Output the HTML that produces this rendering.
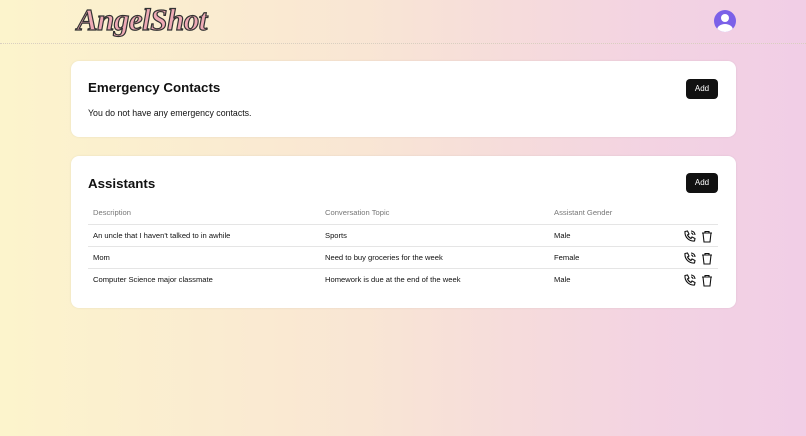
<!DOCTYPE html>
<html><head><style>
*{margin:0;padding:0;box-sizing:border-box}
body{width:806px;height:436px;overflow:hidden;font-family:"Liberation Sans",Arial,sans-serif;background:linear-gradient(90deg,#fcf4cc 0%,#f9e6d4 45%,#f3d3e2 80%,#f1cee6 100%);position:relative;color:#111}
.hdr{position:absolute;left:0;top:0;width:806px;height:44px;border-bottom:1px dotted #d9cfc0}
.logo{position:absolute;left:77px;top:2px;font-family:"Liberation Serif",serif;font-style:italic;font-weight:bold;font-size:31px;color:#eeaab5;-webkit-text-stroke:1.2px #333;letter-spacing:-0.5px}
.av{position:absolute;left:714px;top:10px;width:22px;height:22px;border-radius:50%;background:#7b61e8;overflow:hidden}
.av:before{content:"";position:absolute;left:7px;top:4px;width:8px;height:8px;border-radius:50%;background:#fff}
.av:after{content:"";position:absolute;left:3px;top:14px;width:16px;height:12px;border-radius:50%;background:#fff}
.card{position:absolute;left:71px;width:665px;background:#fff;border-radius:8px;box-shadow:0 0 2px rgba(0,0,0,.08)}
h2{position:absolute;left:17px;font-size:13.3px;font-weight:bold}
.btn{position:absolute;left:615px;width:32px;height:20px;background:#111;color:#fff;border-radius:4px;font-size:8px;text-align:center;line-height:20px}
.p{position:absolute;left:17px;top:47px;font-size:8.8px}
.row{position:absolute;left:17px;width:630px;height:22px;font-size:7.6px;line-height:22px}
.row span{position:absolute}
.c1{left:5px}.c2{left:237px}.c3{left:466px}
.line{border-top:1px solid #e5e5e5}
.th{color:#777}
.ic{position:absolute;left:595px;top:5px}
</style></head><body>
<div class="hdr"><div class="logo">AngelShot</div><div class="av"></div></div>
<div class="card" style="top:61px;height:76px">
<h2 style="top:19px">Emergency Contacts</h2>
<div class="btn" style="top:18px">Add</div>
<div class="p">You do not have any emergency contacts.</div>
</div>
<div class="card" style="top:156px;height:152px">
<h2 style="top:20px">Assistants</h2>
<div class="btn" style="top:17px">Add</div>
<div class="row th" style="top:46px"><span class="c1">Description</span><span class="c2">Conversation Topic</span><span class="c3">Assistant Gender</span></div>
<div class="row line" style="top:68px"><span class="c1">An uncle that I haven't talked to in awhile</span><span class="c2">Sports</span><span class="c3">Male</span><svg class="ic" width="32" height="13" viewBox="0 0 32 13" fill="none" stroke="#111" stroke-width="1.1"><path d="M2 1.5l2.5-.5 1.5 3-1.5 1a7 7 0 0 0 3.5 3.5l1-1.5 3 1.5-.5 2.5C6 11.5 1.5 7 2 1.5z"/><path d="M8 1a4 4 0 0 1 4 4M8 3a2 2 0 0 1 2 2"/><path d="M19 3h10M22 3V1.5h4V3M20 3l1 9h6l1-9"/></svg></div>
<div class="row line" style="top:90px"><span class="c1">Mom</span><span class="c2">Need to buy groceries for the week</span><span class="c3">Female</span><svg class="ic" width="32" height="13" viewBox="0 0 32 13" fill="none" stroke="#111" stroke-width="1.1"><path d="M2 1.5l2.5-.5 1.5 3-1.5 1a7 7 0 0 0 3.5 3.5l1-1.5 3 1.5-.5 2.5C6 11.5 1.5 7 2 1.5z"/><path d="M8 1a4 4 0 0 1 4 4M8 3a2 2 0 0 1 2 2"/><path d="M19 3h10M22 3V1.5h4V3M20 3l1 9h6l1-9"/></svg></div>
<div class="row line" style="top:112px"><span class="c1">Computer Science major classmate</span><span class="c2">Homework is due at the end of the week</span><span class="c3">Male</span><svg class="ic" width="32" height="13" viewBox="0 0 32 13" fill="none" stroke="#111" stroke-width="1.1"><path d="M2 1.5l2.5-.5 1.5 3-1.5 1a7 7 0 0 0 3.5 3.5l1-1.5 3 1.5-.5 2.5C6 11.5 1.5 7 2 1.5z"/><path d="M8 1a4 4 0 0 1 4 4M8 3a2 2 0 0 1 2 2"/><path d="M19 3h10M22 3V1.5h4V3M20 3l1 9h6l1-9"/></svg></div>
</div>
</body></html>
